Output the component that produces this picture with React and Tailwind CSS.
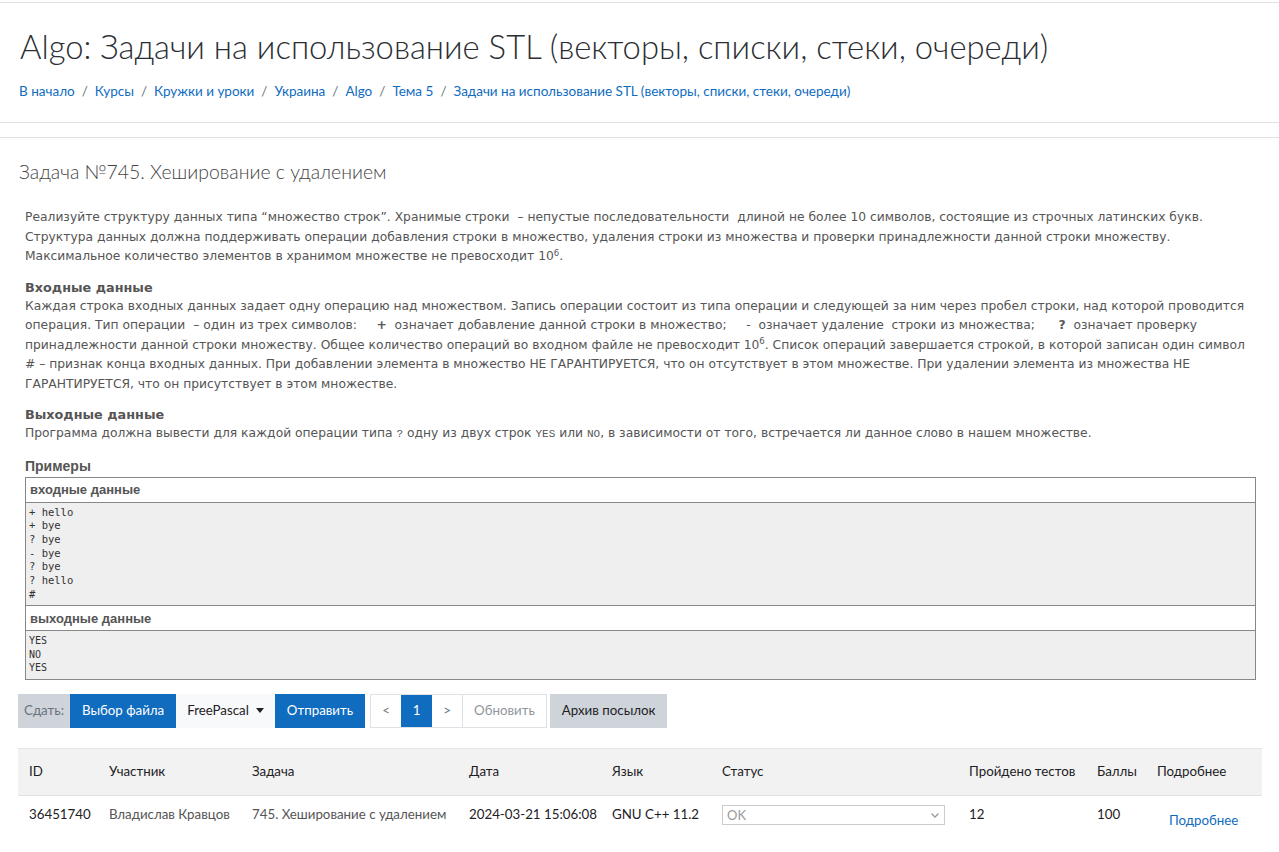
import React from 'react';

const crumbs = ['В начало', 'Курсы', 'Кружки и уроки', 'Украина', 'Algo', 'Тема 5', 'Задачи на использование STL (векторы, списки, стеки, очереди)'];

const inputLines = ['+ hello', '+ bye', '? bye', '- bye', '? bye', '? hello', '#'];
const outputLines = ['YES', 'NO', 'YES'];

const Sup6 = () => <sup className="text-[8.5px]">6</sup>;

const cols = 'grid grid-cols-[80px_143px_217px_143px_110px_247px_128px_60px_105px]';

const App = () => {
  return (
    <div className="min-h-screen bg-white font-['Lato',sans-serif] text-[#1d2125] overflow-hidden">
      {/* Header card */}
      <header className="mt-[2px] border-t border-b border-[#dee2e6] pl-[20px] pt-[22px] pb-[21px]">
        <h1 className="text-[32.8px] font-light leading-[44px] text-[#2a2e33] whitespace-nowrap">
          Algo: Задачи на использование STL (векторы, списки, стеки, очереди)
        </h1>
        <nav className="mt-[12px] flex items-center text-[13.5px] leading-[20px] -ml-[1px]">
          {crumbs.map((c, i) => (
            <span key={c} className="flex items-center">
              {i > 0 && <span className="px-[7px] text-[#6a737b]">/</span>}
              <a href="#" className="text-[#0f6cbf]">{c}</a>
            </span>
          ))}
        </nav>
      </header>

      {/* Main card */}
      <main className="mt-[14px] border-t border-[#dee2e6] pl-[18px] pr-[17px] pt-[22px]">
        <h2 className="font-light text-[19.4px] leading-[24px] text-[#444] pl-[1px]">
          Задача №745. Хеширование с удалением
        </h2>

        <div className="mt-[24px] pl-[7px] font-['DejaVu_Sans',sans-serif] text-[12.3px] leading-[19.5px] text-[#555]">
          <p>
            Реализуйте структуру данных типа “множество строк”. Хранимые строки&nbsp; – непустые последовательности&nbsp; длиной не более 10 символов, состоящие из строчных латинских букв. Структура данных должна поддерживать операции добавления строки в множество, удаления строки из множества и проверки принадлежности данной строки множеству. Максимальное количество элементов в хранимом множестве не превосходит 10<Sup6 />.
          </p>

          <h3 className="mt-[11px] font-bold text-[12.8px] leading-[19px]">Входные данные</h3>
          <p>
            Каждая строка входных данных задает одну операцию над множеством. Запись операции состоит из типа операции и следующей за ним через пробел строки, над которой проводится операция. Тип операции&nbsp; – один из трех символов:&nbsp;&nbsp;&nbsp;&nbsp; <b>+</b>&nbsp; означает добавление данной строки в множество;&nbsp;&nbsp;&nbsp;&nbsp; -&nbsp; означает удаление&nbsp; строки из множества;&nbsp;&nbsp;&nbsp;&nbsp;&nbsp; <b>?</b>&nbsp; означает проверку принадлежности данной строки множеству. Общее количество операций во входном файле не превосходит 10<Sup6 />. Список операций завершается строкой, в которой записан один символ #&nbsp;– признак конца входных данных. При добавлении элемента в множество НЕ ГАРАНТИРУЕТСЯ, что он отсутствует в этом множестве. При удалении элемента из множества НЕ ГАРАНТИРУЕТСЯ, что он присутствует в этом множестве.
          </p>

          <h3 className="mt-[11px] font-bold text-[12.8px] leading-[19px]">Выходные данные</h3>
          <p>
            Программа должна вывести для каждой операции типа <span className="font-['Liberation_Mono',monospace] text-[11px]">?</span> одну из двух строк <span className="font-['Liberation_Mono',monospace] text-[11px]">YES</span> или <span className="font-['Liberation_Mono',monospace] text-[11px]">NO</span>, в зависимости от того, встречается ли данное слово в нашем множестве.
          </p>

          <h3 className="mt-[12px] mb-[2px] font-['Liberation_Sans',sans-serif] font-bold text-[14px] leading-[18px]">Примеры</h3>
          <div className="border border-[#888] w-[1231px]">
            <div className="px-[4px] h-[25px] flex items-center border-b border-[#888] bg-white font-['Liberation_Sans',sans-serif] font-bold text-[13px] text-[#555]">входные данные</div>
            <pre className="bg-[#efefef] px-[3px] pt-[3px] pb-[4px] font-['DejaVu_Sans_Mono',monospace] text-[10.5px] leading-[13.7px] text-[#333]">
              {inputLines.join('\n')}
            </pre>
            <div className="px-[4px] h-[26px] flex items-center border-t border-b border-[#888] bg-white font-['Liberation_Sans',sans-serif] font-bold text-[13px] text-[#555]">выходные данные</div>
            <pre className="bg-[#efefef] px-[3px] pt-[3px] pb-[4px] font-['DejaVu_Sans_Mono',monospace] text-[10px] leading-[13.5px] text-[#333]">
              {outputLines.join('\n')}
            </pre>
          </div>
        </div>

        {/* Submit toolbar */}
        <div className="mt-[14px] flex items-center text-[13.3px] h-[34px]">
          <span className="h-full px-[6px] flex items-center bg-[#ced4da] text-[#6a737b]">Сдать:</span>
          <button className="h-full px-[12px] bg-[#0f6cbf] text-white">Выбор файла</button>
          <button className="h-full px-[11px] bg-[#f8f9fa] text-[#1d2125] flex items-center gap-[7px]">
            FreePascal
            <span className="border-l-[4px] border-r-[4px] border-t-[5px] border-l-transparent border-r-transparent border-t-[#1d2125]" />
          </button>
          <button className="h-full px-[12px] bg-[#0f6cbf] text-white">Отправить</button>
          <div className="ml-[5px] h-full flex border border-[#dee2e6] text-[#6a737b]">
            <span className="w-[30px] flex items-center justify-center">&lt;</span>
            <span className="w-[31px] flex items-center justify-center bg-[#0f6cbf] text-white">1</span>
            <span className="w-[31px] flex items-center justify-center border-r border-[#dee2e6]">&gt;</span>
            <span className="px-[11px] flex items-center text-[#8f959e]">Обновить</span>
          </div>
          <button className="ml-[3px] h-full px-[12px] bg-[#ced4da] text-[#1d2125]">Архив посылок</button>
        </div>

        {/* Submissions table */}
        <div className="mt-[20px] w-[1244px] text-[13.3px]">
          <div className={`${cols} bg-[#f2f2f2] h-[47px] items-center pl-[11px] text-[#1d2125] border-t border-[#e6e6e6]`}>
            <span>ID</span>
            <span>Участник</span>
            <span>Задача</span>
            <span>Дата</span>
            <span>Язык</span>
            <span>Статус</span>
            <span>Пройдено тестов</span>
            <span>Баллы</span>
            <span>Подробнее</span>
          </div>
          <div className={`${cols} h-[40px] items-center pl-[11px] border-t border-[#dee2e6] text-[#1d2125]`}>
            <span>36451740</span>
            <span className="text-[#555]">Владислав Кравцов</span>
            <span className="text-[#555]">745. Хеширование с удалением</span>
            <span>2024-03-21 15:06:08</span>
            <span>GNU C++ 11.2</span>
            <span className="pr-[24px]">
              <span className="flex items-center justify-between h-[20px] border border-[#ccc] px-[4px] text-[#999] text-[13px]">
                OK
                <svg width="10" height="10" viewBox="0 0 10 10" className="text-[#999]">
                  <path d="M1.5 3.5 L5 7 L8.5 3.5" fill="none" stroke="currentColor" strokeWidth="1.3" />
                </svg>
              </span>
            </span>
            <span>12</span>
            <span>100</span>
            <a href="#" className="pl-[12px] pt-[12px] text-[#0f6cbf]">Подробнее</a>
          </div>
        </div>
      </main>
    </div>
  );
};

export default App;
